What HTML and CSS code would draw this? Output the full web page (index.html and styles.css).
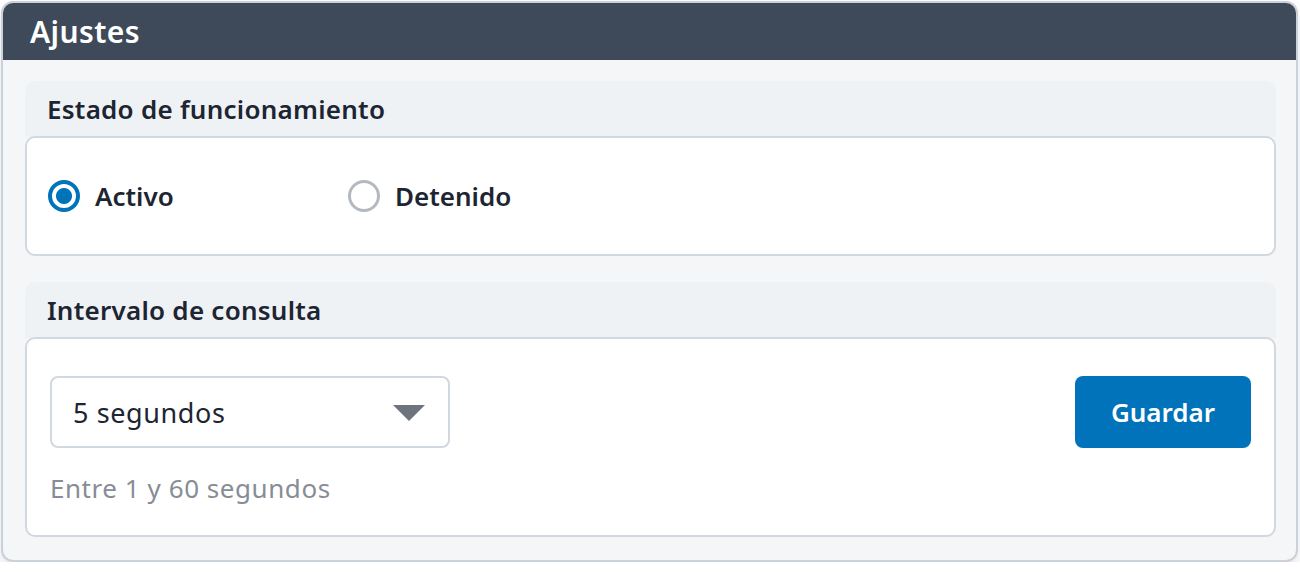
FILE: index.html
```html
<!DOCTYPE html>
<html lang="es">
<head>
<meta charset="utf-8">
<title>Ajustes</title>
<link rel="stylesheet" href="styles.css">
</head>
<body>
<div class="panel">
  <div class="panel-head">
    <h1 class="panel-title">Ajustes</h1>
  </div>
  <div class="panel-body">
    <section class="section">
      <div class="section-head">Estado de funcionamiento</div>
      <div class="card card-radios">
        <label class="option">
          <span class="radio radio-on"></span>
          <span class="option-label">Activo</span>
        </label>
        <label class="option">
          <span class="radio"></span>
          <span class="option-label">Detenido</span>
        </label>
      </div>
    </section>
    <section class="section">
      <div class="section-head">Intervalo de consulta</div>
      <div class="card card-interval">
        <div class="interval-row">
          <div class="select">
            <span class="select-value">5 segundos</span>
            <span class="select-arrow"></span>
          </div>
          <button class="btn">Guardar</button>
        </div>
        <div class="hint">Entre 1 y 60 segundos</div>
      </div>
    </section>
  </div>
</div>
</body>
</html>
```

FILE: styles.css
```css
* { box-sizing: border-box; }
html, body { margin: 0; padding: 0; background: #ffffff; }
body {
  font-family: "Noto Sans", "Liberation Sans", sans-serif;
  color: #1e2532;
  padding: 1px 2px 0 1px;
}
.panel {
  width: 1297px;
  height: 561px;
  border: 2px solid #cbd1d9;
  border-radius: 12px;
  background: #f4f6f8;
  overflow: hidden;
  box-shadow: 0 5px 10px rgba(30, 40, 55, 0.12);
}
.panel-head {
  background: #3e4a59;
  height: 57px;
  display: flex;
  align-items: center;
  padding-left: 27px;
}
.panel-title {
  margin: 0;
  color: #ffffff;
  font-size: 30px;
  font-weight: 600;
  letter-spacing: 0.4px;
}
.panel-body {
  padding: 21px 20px 0 22px;
  display: flex;
  flex-direction: column;
  gap: 26px;
}
.section-head {
  background: #eef2f5;
  border-radius: 10px 10px 0 0;
  height: 56px;
  display: flex;
  align-items: center;
  padding-left: 22px;
  font-size: 26px;
  font-weight: 600;
  letter-spacing: 0.25px;
  color: #1e2532;
}
.card {
  background: #ffffff;
  border: 2px solid #d2d8df;
  border-radius: 10px;
  margin-top: -1px;
}
.card-radios {
  height: 120px;
  display: flex;
  align-items: center;
  padding-left: 21px;
}
.option {
  display: flex;
  align-items: center;
  gap: 15px;
  width: 300px;
}
.radio {
  width: 32px;
  height: 32px;
  border-radius: 50%;
  border: 3px solid #b4b9c1;
  background: #ffffff;
  flex: none;
}
.radio-on {
  border: 4px solid #0073bb;
  background: radial-gradient(circle, #0073bb 0 7.5px, #ffffff 8.5px);
}
.option-label {
  font-size: 26px;
  font-weight: 600;
  color: #1e2532;
}
.card-interval {
  height: 200px;
  padding: 37px 23px 0 23px;
}
.interval-row {
  display: flex;
  justify-content: space-between;
  align-items: center;
}
.select {
  width: 400px;
  height: 72px;
  border: 2px solid #d2d8df;
  border-radius: 8px;
  display: flex;
  align-items: center;
  justify-content: space-between;
  padding: 0 23px 0 21px;
}
.select-value {
  font-size: 27px;
  letter-spacing: 0.6px;
  color: #1e2532;
}
.select-arrow {
  width: 0;
  height: 0;
  border-left: 16px solid transparent;
  border-right: 16px solid transparent;
  border-top: 16px solid #6e747d;
  margin-top: 2px;
}
.btn {
  width: 176px;
  height: 72px;
  border: 0;
  border-radius: 8px;
  background: #0073bb;
  color: #ffffff;
  font-family: inherit;
  font-size: 26px;
  font-weight: 600;
}
.hint {
  margin-top: 22px;
  font-size: 26px;
  letter-spacing: 0.55px;
  color: #878d96;
}
```
